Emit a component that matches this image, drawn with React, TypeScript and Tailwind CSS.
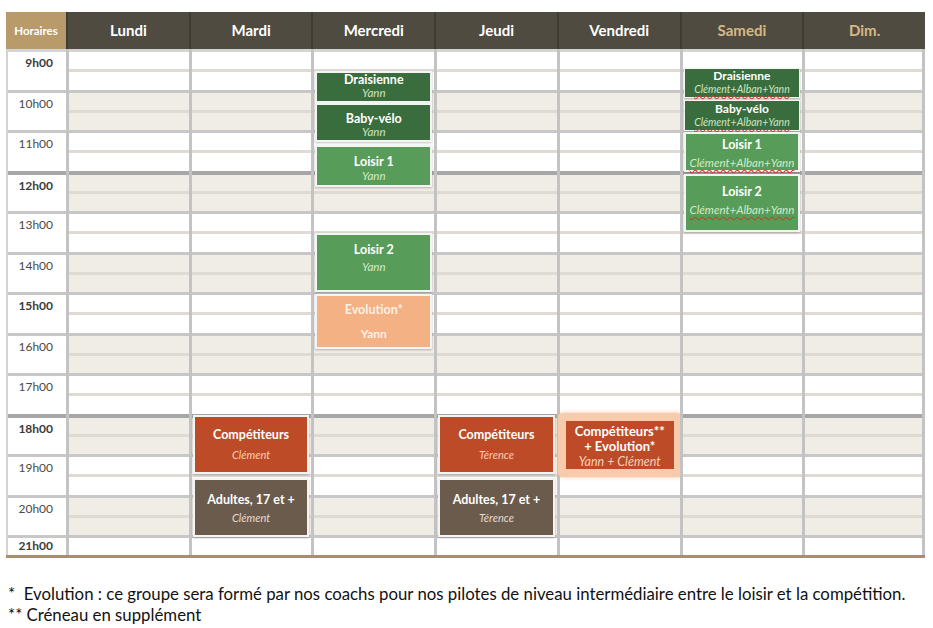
import React from "react";

const days = ["Lundi", "Mardi", "Mercredi", "Jeudi", "Vendredi", "Samedi", "Dim."];
const hours = [9, 10, 11, 12, 13, 14, 15, 16, 17, 18, 19, 20, 21];

type Tone = "dark" | "light" | "red" | "brown" | "peach";

type Slot = {
  title: string;
  name: string;
  top: number;
  h: number;
  pt: number;
  gap: number;
  tone: Tone;
  underline?: boolean;
  tight?: boolean;
};

const tones: Record<Tone, { bg: string; title: string; name: string }> = {
  dark: { bg: "bg-[#3a6d3d]", title: "text-white", name: "text-[#cde5c1] text-[11.5px]" },
  light: { bg: "bg-[#589c59]", title: "text-white", name: "text-[#d3ebc8] text-[11.5px]" },
  red: { bg: "bg-[#bd4b27]", title: "text-white", name: "text-[#f8cfb2] text-[11px]" },
  brown: { bg: "bg-[#6b5b4c]", title: "text-white", name: "text-[#e4dcd2] text-[11px]" },
  peach: { bg: "bg-[#f4b183]", title: "text-[#fdf0e6]", name: "text-[#fdf0e6] text-[12px] font-bold not-italic" },
};

// positions in px from the top of the day column (9h00 line)
const slots: Record<string, Slot[]> = {
  Mardi: [
    { title: "Compétiteurs", name: "Clément", top: 366, h: 59, pt: 11, gap: 7, tone: "red" },
    { title: "Adultes, 17 et +", name: "Clément", top: 429, h: 59, pt: 13, gap: 5, tone: "brown" },
  ],
  Mercredi: [
    { title: "Draisienne", name: "Yann", top: 22, h: 32, pt: 0, gap: 0, tone: "dark" },
    { title: "Baby-vélo", name: "Yann", top: 54, h: 39, pt: 7, gap: 0, tone: "dark" },
    { title: "Loisir 1", name: "Yann", top: 96, h: 42, pt: 8, gap: 1, tone: "light" },
    { title: "Loisir 2", name: "Yann", top: 184, h: 59, pt: 8, gap: 4, tone: "light" },
    { title: "Evolution*", name: "Yann", top: 245, h: 55, pt: 7, gap: 11, tone: "peach" },
  ],
  Jeudi: [
    { title: "Compétiteurs", name: "Térence", top: 366, h: 59, pt: 11, gap: 7, tone: "red" },
    { title: "Adultes, 17 et +", name: "Térence", top: 429, h: 59, pt: 13, gap: 5, tone: "brown" },
  ],
  Samedi: [
    { title: "Draisienne", name: "Clément+Alban+Yann", top: 19, h: 30, pt: 0, gap: 0, tone: "dark", underline: true, tight: true },
    { title: "Baby-vélo", name: "Clément+Alban+Yann", top: 51, h: 31, pt: 1, gap: 0, tone: "dark", underline: true, tight: true },
    { title: "Loisir 1", name: "Clément+Alban+Yann", top: 83, h: 40, pt: 4, gap: 5, tone: "light", underline: true },
    { title: "Loisir 2", name: "Clément+Alban+Yann", top: 125, h: 58, pt: 9, gap: 5, tone: "light", underline: true },
  ],
};

const HourCell = ({ hour }: { hour: number }) => {
  const beige = hour % 2 === 0;
  const heavy = hour === 12 || hour === 18;
  return (
    <div
      className={`flex flex-col ${hour === 21 ? "h-[20px]" : "h-[40.5px]"} ${
        heavy ? "border-t-4 border-[#a7a7a7]" : hour === 9 ? "border-t-[3px] border-[#d4d4d4]" : "border-t-[3px] border-[#c7c7c7]"
      } ${beige ? "bg-[#f0ece6]" : "bg-white"}`}
    >
      <div className="flex-1" />
      {hour !== 21 && <div className="h-[3px] bg-[#dfdbd4]" />}
      <div className="flex-1" />
    </div>
  );
};

const Block = ({ slot }: { slot: Slot }) => {
  const tone = tones[slot.tone];
  return (
    <div
      className={`absolute left-[1px] right-[2px] flex flex-col items-center border-[#f4f4f4] shadow-[0_1px_2px_rgba(0,0,0,0.25)] ${
        slot.tight ? "border" : "border-2"
      } ${tone.bg}`}
      style={{ top: slot.top, height: slot.h, paddingTop: slot.pt }}
    >
      <div
        className={`font-bold ${slot.tight ? "text-[12px] leading-[14px]" : "text-[12.5px] leading-[13px]"} ${tone.title}`}
      >
        {slot.title}
      </div>
      <div
        className={`italic ${tone.name} ${slot.tight ? "!text-[10.5px] leading-[12.5px]" : "leading-[13px]"} ${
          slot.underline ? "underline decoration-wavy decoration-[#d33a2c] underline-offset-2" : ""
        }`}
        style={{ marginTop: slot.gap }}
      >
        {slot.name}
      </div>
    </div>
  );
};

const Vendredi = () => (
  <div className="absolute -left-[2px] -right-[2px] top-[364px] h-[64px] rounded-[5px] bg-[#f8cbad] p-[8px] shadow-[0_0_4px_rgba(244,177,131,0.8)]">
    <div className="flex h-full flex-col items-center overflow-hidden bg-[#bd4b27] pt-[3px] text-center">
      <div className="text-[13px] font-bold leading-[15px] text-white">Compétiteurs**</div>
      <div className="text-[13px] font-bold leading-[15px] text-white">+ Evolution*</div>
      <div className="text-[12.5px] italic leading-[16px] text-[#f8cfb2]">Yann + Clément</div>
    </div>
  </div>
);

export default function App() {
  return (
    <div className="h-[628px] w-[933px] bg-white font-['Lato',sans-serif]">
      <div className="ml-[6px] w-[919px] pt-[12px]">
        <div className="grid h-[37px] grid-cols-[60px_repeat(7,minmax(0,1fr))] bg-[#4f4b41]">
          <div className="flex items-center justify-center bg-[#b99a6a] text-[11.5px] font-bold text-white">Horaires</div>
          {days.map((d) => (
            <div
              key={d}
              className={`flex items-center justify-center border-l-2 border-[#3f3c34] text-[15px] font-bold ${
                d === "Samedi" || d === "Dim." ? "text-[#d7b986]" : "text-white"
              }`}
            >
              {d}
            </div>
          ))}
        </div>

        <div className="grid grid-cols-[60px_repeat(7,minmax(0,1fr))] border-b-[3px] border-[#a98f63]">
          <div className="flex flex-col border-l-2 border-[#d3d3d3] bg-white">
            {hours.map((h) => (
              <div
                key={h}
                className={`${h === 21 ? "h-[20px] pt-[1px]" : "h-[40.5px] pt-[4px]"} ${
                  h === 12 || h === 18 ? "border-t-4 border-[#a7a7a7]" : h === 9 ? "border-t-[3px] border-[#d4d4d4]" : "border-t-[3px] border-[#c7c7c7]"
                } pr-[13px] text-right text-[12px] leading-[14px] ${
                  [9, 12, 15, 18, 21].includes(h) ? "font-bold text-[#3b3b3b]" : "text-[#4a4a4a]"
                }`}
              >
                {h}h00
              </div>
            ))}
          </div>
          {days.map((d) => (
            <div
              key={d}
              className={`relative flex flex-col border-l-[3px] border-[#c3c3c3] ${d === "Dim." ? "border-r-[3px]" : ""}`}
            >
              {hours.map((h) => (
                <HourCell key={h} hour={h} />
              ))}
              {(slots[d] ?? []).map((s) => (
                <Block key={s.title} slot={s} />
              ))}
              {d === "Vendredi" && <Vendredi />}
            </div>
          ))}
        </div>

        <div className="pl-[2px] pt-[25px] text-[16.8px] leading-[21px] text-[#111]">
          <p className="whitespace-pre">*  Evolution : ce groupe sera formé par nos coachs pour nos pilotes de niveau intermédiaire entre le loisir et la compétition.</p>
          <p>** Créneau en supplément</p>
        </div>
      </div>
    </div>
  );
}
